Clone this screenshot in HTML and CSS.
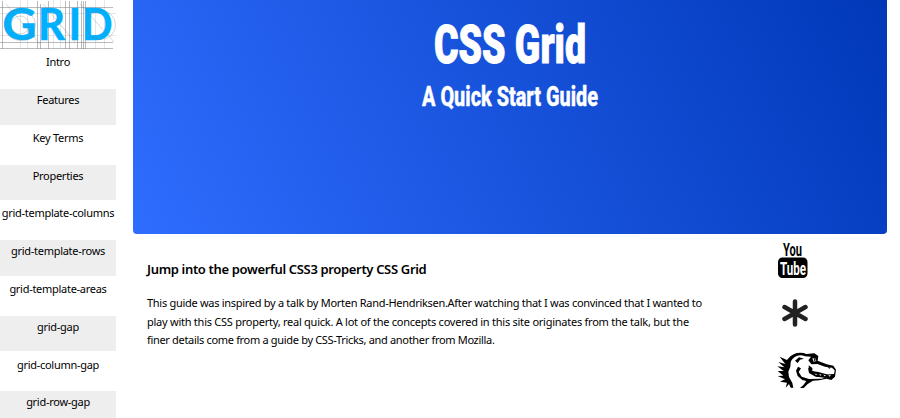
FILE: index.html
```html
<!DOCTYPE html>
<html lang="en">
<head>
<meta charset="utf-8">
<title>CSS Grid</title>
<link rel="stylesheet" href="styles.css">
</head>
<body>
<div class="page">
  <nav class="sidebar">
    <svg class="logo" viewBox="0 0 116 49">
      <g class="guides">
        <path class="faint" d="M0 13.500H116M0 35.500H116M20.500 0V49M27.500 0V49M53.500 0V49M60.500 0V49M95.500 0V49M104.500 0V49"/>
        <path d="M0 7.500H113M0 42.500H113M0 48.500H113M2.500 1V49M37.500 1V49M40.500 4V49M48.500 1V49M65.500 1V49M69.500 1V49M77.500 1V49M81.500 1V49M83.500 1V49M85.500 1V49"/>
      </g>
      <g class="letters"><text x="2.500" y="40" textLength="34" lengthAdjust="spacingAndGlyphs">G</text><text x="38" y="40" textLength="27" lengthAdjust="spacingAndGlyphs">R</text><text x="68.500" y="40">I</text><text x="82" y="40" textLength="30.500" lengthAdjust="spacingAndGlyphs">D</text></g>
      <g class="guides light"><circle cx="20" cy="25" r="15.500"/><circle cx="20" cy="25" r="9"/><circle cx="101" cy="25" r="14.500"/><path d="M6 4L40 44M43 4L75 42M80 4L114 42"/></g>
    </svg>
    <a class="item">Intro</a>
    <a class="item">Features</a>
    <a class="item">Key Terms</a>
    <a class="item">Properties</a>
    <a class="item">grid-template-columns</a>
    <a class="item">grid-template-rows</a>
    <a class="item">grid-template-areas</a>
    <a class="item">grid-gap</a>
    <a class="item">grid-column-gap</a>
    <a class="item">grid-row-gap</a>
  </nav>
  <main class="main">
    <header class="hero">
      <svg class="titles" viewBox="0 0 200 120">
        <text class="title" x="24" y="62.500" textLength="152" lengthAdjust="spacingAndGlyphs">CSS Grid</text>
        <text class="subtitle" x="12" y="105.500" textLength="176" lengthAdjust="spacingAndGlyphs">A Quick Start Guide</text>
      </svg>
    </header>
    <div class="content">
      <article class="article">
        <h3>Jump into the powerful CSS3 property CSS Grid</h3>
        <p><span class="l1">This guide was inspired by a talk by Morten Rand-Hendriksen.After watching that I was convinced that I wanted to</span><br><span class="l2">play with this CSS property, real quick. A lot of the concepts covered in this site originates from the talk, but the</span><br><span class="l3">finer details come from a guide by CSS-Tricks, and another from Mozilla.</span></p>
      </article>
      <aside class="links">
        <svg class="youtube" viewBox="0 0 30 38">
          <text x="5" y="14.500" textLength="19" lengthAdjust="spacingAndGlyphs">You</text>
          <rect x="0" y="16.500" width="29.500" height="20.500" rx="4.500"/>
          <text class="tube" x="2" y="33.500" textLength="26" lengthAdjust="spacingAndGlyphs">Tube</text>
        </svg>
        <svg class="asterisk" viewBox="0 0 26 28"><path d="M13 2.500V25.500M2.500 8L23.500 20M23.500 8L2.500 20"/></svg>
        <svg class="dino" viewBox="36 33 180 114">
          <path d="M44 50L66 60Q78 43 96 39Q112 36 124 42L148 40L160 48L158 62L185 73L205 77L213 89L210 110L199 120L184 116L163 121L144 122L128 132L116 144L105 144Q118 134 124 123L112 120L98 108L93 92L99 80L108 85L101 96L110 110L132 117L170 116L184 112L152 110L132 99L129 83L142 94L160 98L183 104L207 103L209 91L201 83L180 80L157 72L139 73L130 61L138 50L120 49Q108 43 95 48Q80 55 77 67L76 80L70 95L72 111L82 129L85 143L77 143L72 132L62 143L66 128L45 125L60 118L38 108L55 107L38 93L56 93L37 79L58 82L40 66L61 72Z"/>
          <path d="M90 62L102 52L117 56L105 59L98 69ZM131 76L142 84L142 98L132 95ZM187 80L198 83L193 86ZM135 92L160 96L190 104L209 102L204 113L184 114L155 110Z"/>
          <path class="teeth" d="M142 55L152 56L154 63L146 65ZM149 101L153 105L157 102ZM162 102L166 107L170 104ZM175 104L179 109L183 106ZM190 106L194 110L198 106Z"/>
          <path d="M147 56L152 58L151 63L147 62Z"/>
        </svg>
      </aside>
    </div>
  </main>
</div>
</body>
</html>
```
FILE: styles.css
```css
body { margin: 0; background: #fff; color: #000; font-family: "Noto Sans", sans-serif; }
.page { display: grid; grid-template-columns: 116px 753.5px; column-gap: 17px; height: 418px; overflow: hidden; }
.sidebar { display: flex; flex-direction: column; gap: 2.3px; }
.logo { display: block; width: 116px; height: 49px; flex: none; }
.guides { fill: none; stroke: #777; stroke-width: .5; }
.light { stroke-width: .3; }
.faint { stroke: #ccc; }
.letters { font: 700 43px Lato, sans-serif; fill: #00b0ff; stroke: #00b0ff; stroke-width: .6; }
.item { height: 35.5px; flex: none; font-size: 11px; line-height: 22.5px; letter-spacing: -.28px; text-align: center; white-space: nowrap; }
.item:nth-child(odd) { background: #eee; }
.hero { height: 234px; border-radius: 0 0 4px 4px; background: linear-gradient(62deg, #2f6dff, #0038b8); }
.titles { display: block; width: 200px; height: 120px; margin-left: 277px; fill: #fff; }
.title { font: 900 54px Roboto, sans-serif; stroke: #fff; stroke-width: 1; }
.subtitle { font: 800 27px Roboto, sans-serif; stroke: #fff; stroke-width: .4; }
.content { display: grid; grid-template-columns: 645px 108px; }
.article { padding: 26px 0 0 14px; white-space: nowrap; }
h3 { margin: 0; font-size: 13px; line-height: 18px; font-weight: 600; letter-spacing: -.34px; }
p { margin: 16px 0 0; font-size: 11px; line-height: 18.5px; }
.l1 { letter-spacing: -.29px; }
.l2 { letter-spacing: -.25px; }
.l3 { letter-spacing: -.32px; }
.links { display: flex; flex-direction: column; align-items: flex-start; padding-top: 7px; }
.links svg { display: block; }
.youtube { width: 30px; height: 38px; font: 700 18px Roboto, sans-serif; }
.tube { fill: #fff; }
.asterisk { width: 26px; height: 28px; margin: 20px 0 0 4px; fill: none; stroke: #222; stroke-width: 4.5; stroke-linecap: round; }
.dino { width: 60px; height: 38px; margin: 24px 0 0 -1px; }
.teeth { fill: #fff; }
```
